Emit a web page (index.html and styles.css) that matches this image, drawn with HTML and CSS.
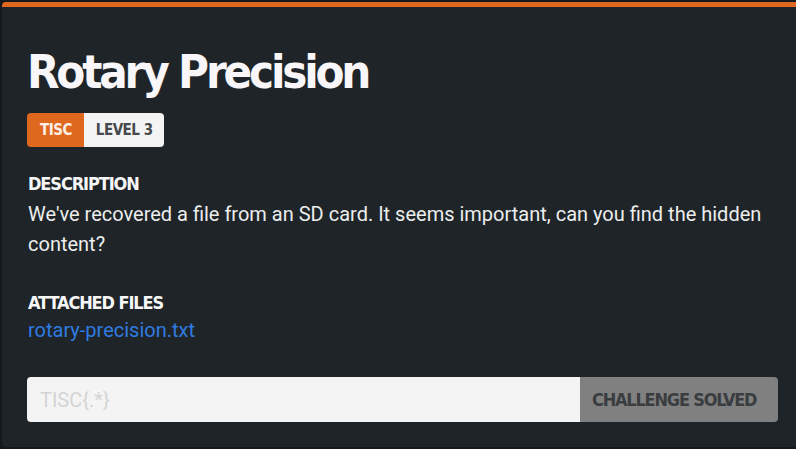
FILE: index.html
```html
<!DOCTYPE html>
<html>
<head>
<meta charset="utf-8">
<link rel="stylesheet" href="styles.css">
</head>
<body>
<div class="card">
  <h1 class="title">Rotary Precision</h1>
  <div class="badges">
    <span class="badge badge-cat">TISC</span>
    <span class="badge badge-level">LEVEL 3</span>
  </div>
  <section class="section">
    <h2 class="label">DESCRIPTION</h2>
    <p class="desc">We've recovered a file from an SD card. It seems important, can you find the hidden content?</p>
  </section>
  <section class="section files">
    <h2 class="label">ATTACHED FILES</h2>
    <a class="file" href="#">rotary-precision.txt</a>
  </section>
  <form class="flag">
    <input class="flag-input" type="text" placeholder="TISC{.*}">
    <button class="flag-btn" type="button">CHALLENGE SOLVED</button>
  </form>
</div>
</body>
</html>
```
FILE: styles.css
```css
html, body {
  margin: 0;
  padding: 0;
  background: #16191c;
  overflow: hidden;
}
.card {
  box-sizing: border-box;
  margin: 2px 0 0 2px;
  width: 820px;
  height: 445px;
  background: #1e2428;
  border-top: 5px solid #e0681e;
  border-radius: 4px;
  padding: 0 26px;
  display: flex;
  flex-direction: column;
}
.title {
  margin: 35px 0 0 -1px;
  font-family: "DejaVu Sans Condensed", "DejaVu Sans", sans-serif;
  font-weight: 700;
  font-size: 47px;
  line-height: 60px;
  letter-spacing: -3.2px;
  color: #f8f6f8;
}
.badges {
  display: flex;
  margin-top: 11px;
  margin-left: -1px;
  align-self: flex-start;
  border-radius: 4px;
  overflow: hidden;
  height: 34px;
}
.badge {
  display: flex;
  align-items: center;
  font-family: "DejaVu Sans Condensed", "DejaVu Sans", sans-serif;
  font-weight: 700;
  font-size: 15px;
  letter-spacing: -0.5px;
}
.badge-cat {
  padding: 0 12px 0 13px;
  background: #df681f;
  color: #fbefe6;
}
.badge-level {
  padding: 0 11px 0 12px;
  background: #f4f4f4;
  color: #45494d;
}
.section {
  margin-top: 26px;
}
.label {
  margin: 0;
  font-family: "DejaVu Sans Condensed", "DejaVu Sans", sans-serif;
  font-weight: 700;
  font-size: 18px;
  line-height: 22px;
  letter-spacing: -1.1px;
  color: #f6f6f6;
}
.desc {
  margin: 4px 0 0;
  font-family: Roboto, sans-serif;
  font-size: 20px;
  line-height: 30px;
  color: #eceded;
}
.files {
  margin-top: 33px;
}
.file {
  display: block;
  margin-top: 3px;
  font-family: Roboto, sans-serif;
  font-size: 20px;
  line-height: 26px;
  color: #2f7be0;
  text-decoration: none;
}
.flag {
  display: flex;
  margin-top: 34px;
  margin-left: -1px;
  width: 751px;
  height: 45px;
}
.flag-input {
  flex: 1;
  min-width: 0;
  box-sizing: border-box;
  border: none;
  outline: none;
  margin: 0;
  padding: 0 13px;
  background: #f4f4f4;
  border-radius: 4px 0 0 4px;
  font-family: Roboto, sans-serif;
  font-size: 20px;
  color: #333;
}
.flag-input::placeholder {
  color: #d4d4d4;
}
.flag-btn {
  width: 198px;
  margin: 0;
  padding: 0 0 0 12px;
  border: none;
  background: #808080;
  border-radius: 0 4px 4px 0;
  font-family: "DejaVu Sans Condensed", "DejaVu Sans", sans-serif;
  font-weight: 700;
  font-size: 18px;
  letter-spacing: -1.2px;
  color: #3a3d40;
  text-align: left;
}
```
